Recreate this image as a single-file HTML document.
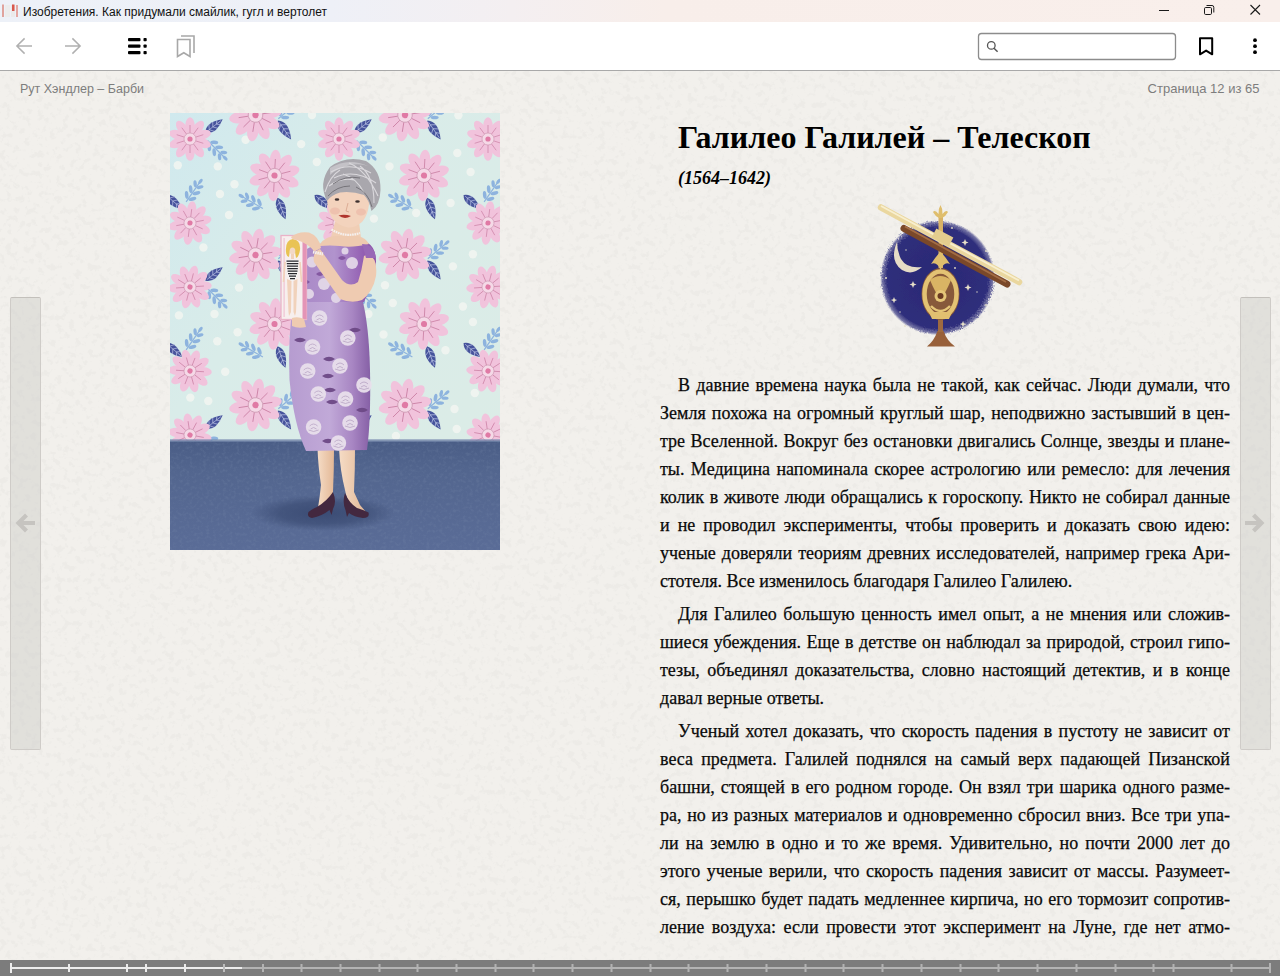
<!DOCTYPE html>
<html><head><meta charset="utf-8">
<style>
*{margin:0;padding:0;box-sizing:border-box}
html,body{width:1280px;height:976px;overflow:hidden;font-family:"Liberation Sans",sans-serif}
body{position:relative;background:#efece7}
#titlebar{position:absolute;left:0;top:0;width:1280px;height:22px;background:linear-gradient(90deg,#edf1f8 0%,#eef0f7 26%,#f4eff1 40%,#f8eeea 52%,#f9efeb 100%)}
#titlebar .t{position:absolute;left:23px;top:5px;font-size:12px;color:#111;white-space:nowrap}
#toolbar{position:absolute;left:0;top:22px;width:1280px;height:48px;background:#fff}
#tbborder{position:absolute;left:0;top:70px;width:1280px;height:1px;background:#a9a9a9}
#page{position:absolute;left:0;top:71px;width:1280px;height:889px;background:#efece7}
.hdr{position:absolute;top:82px;font-size:12.5px;color:#7d7d7d;white-space:nowrap}
#bottombar{position:absolute;left:0;top:960px;width:1280px;height:16px;background:#7d7d7d}
.navbar{position:absolute;top:297px;width:31px;height:453px;background:rgba(205,203,199,0.45);border:1px solid #cfccc8;border-top-color:#c3c0bb;border-radius:2px}
#text{position:absolute;left:660px;top:370.5px;width:570px;font-family:"Liberation Serif",serif;font-size:18px;line-height:28px;color:#0a0a0a;-webkit-text-stroke:0.25px #0a0a0a}
#text .p{margin-bottom:5.2px}
#text .l{height:28px;text-align:justify;text-align-last:justify}
#text .l.ind{padding-left:18px}
#text .l.last{text-align-last:left}
#title{position:absolute;left:678px;top:119px;font-family:"Liberation Serif",serif;font-weight:bold;font-size:32px;color:#000;white-space:nowrap}
#dates{position:absolute;left:678px;top:167.5px;font-family:"Liberation Serif",serif;font-weight:bold;font-style:italic;font-size:18px;color:#000;white-space:nowrap}
</style></head><body>
<div id="titlebar"><span class="t">Изобретения. Как придумали смайлик, гугл и вертолет</span></div>
<div id="toolbar"></div>
<svg id="icons" width="1280" height="71" style="position:absolute;left:0;top:0">
 <!-- app icon -->
 <rect x="2" y="4.5" width="2" height="12.5" fill="#e0a39d"/>
 <rect x="5" y="5" width="5" height="12" fill="#ececec"/>
 <rect x="11" y="5" width="4" height="12" fill="#ebeaea"/>
 <rect x="12" y="4.5" width="2.5" height="6.5" fill="#d9574d"/>
 <rect x="16" y="5" width="2" height="12" fill="#e4a6a1"/>
 <!-- window controls -->
 <rect x="1159" y="10" width="10" height="1" fill="#1a1a1a"/>
 <rect x="1204.5" y="7.5" width="7" height="7" rx="1.2" fill="none" stroke="#1a1a1a" stroke-width="1"/>
 <path d="M1206.5 5.5 h5.5 a1.8 1.8 0 0 1 1.8 1.8 v5.2" fill="none" stroke="#1a1a1a" stroke-width="1"/>
 <path d="M1250.5 5 L1260 14.5 M1260 5 L1250.5 14.5" stroke="#1a1a1a" stroke-width="1.1"/>
 <!-- back / forward -->
 <path d="M32 46 H17 M24.6 38.4 L16.9 46 L24.6 53.6" fill="none" stroke="#b0b0b0" stroke-width="1.5"/>
 <path d="M65 46 H80 M72.4 38.4 L80.1 46 L72.4 53.6" fill="none" stroke="#b0b0b0" stroke-width="1.5"/>
 <!-- toc icon -->
 <rect x="128" y="38" width="12.5" height="3.2" rx="1" fill="#000"/>
 <rect x="128" y="44.5" width="12.5" height="3.2" rx="1" fill="#000"/>
 <rect x="128" y="51" width="12.5" height="3.2" rx="1" fill="#000"/>
 <rect x="143.5" y="38" width="3.2" height="3.2" rx="0.8" fill="#000"/>
 <rect x="143.5" y="44.5" width="3.2" height="3.2" rx="0.8" fill="#000"/>
 <rect x="143.5" y="51" width="3.2" height="3.2" rx="0.8" fill="#000"/>
 <!-- bookmarks list icon -->
 <path d="M177.5 56.5 V39.5 H190 V56.5 L183.8 52.8 Z" fill="none" stroke="#a8a8a8" stroke-width="1.6" stroke-linejoin="miter"/>
 <path d="M181 36 H194 V53" fill="none" stroke="#a8a8a8" stroke-width="1.6"/>
 <!-- search box -->
 <rect x="978.5" y="33.5" width="197" height="26" rx="3" fill="#fff" stroke="#8c8c8c" stroke-width="1.3"/>
 <circle cx="991.3" cy="45.4" r="3.8" fill="none" stroke="#555" stroke-width="1.3"/>
 <path d="M994 48.2 L997.6 51.8" stroke="#555" stroke-width="1.5"/>
 <!-- bookmark -->
 <path d="M1200 54.3 V38.2 H1212.2 V54.3 L1206.1 50.6 Z" fill="none" stroke="#000" stroke-width="2" stroke-linejoin="round"/>
 <!-- kebab -->
 <circle cx="1255" cy="40.2" r="1.9" fill="#000"/>
 <circle cx="1255" cy="46.2" r="1.9" fill="#000"/>
 <circle cx="1255" cy="52.2" r="1.9" fill="#000"/>
</svg>
<div id="tbborder"></div>
<svg id="paper" width="1280" height="889" style="position:absolute;left:0;top:71px">
<filter id="speck" x="0" y="0" width="100%" height="100%">
<feTurbulence type="fractalNoise" baseFrequency="0.16" numOctaves="3" seed="7" result="n"/>
<feColorMatrix in="n" type="matrix" values="0 0 0 0 0.82  0 0 0 0 0.81  0 0 0 0 0.78  -7 0 0 0 3.3"/>
</filter>
<rect width="1280" height="889" fill="#f2f0ec"/>
<rect width="1280" height="889" filter="url(#speck)" opacity="0.6"/>
</svg>
<div class="hdr" style="left:20px">Рут Хэндлер – Барби</div>
<div class="hdr" style="right:20.5px;font-size:13px;top:80.5px">Страница 12 из 65</div>
<div class="navbar" style="left:10px"></div>
<div class="navbar" style="left:1240px"></div>
<svg width="1280" height="40" style="position:absolute;left:0;top:503px">
<path d="M35 20 H20 M26.5 12 L18.5 20 L26.5 28" fill="none" stroke="#c6c4c0" stroke-width="4.2" stroke-linejoin="miter"/>
<path d="M1245 20 H1260 M1253.5 12 L1261.5 20 L1253.5 28" fill="none" stroke="#c6c4c0" stroke-width="4.2" stroke-linejoin="miter"/>
</svg>
<!--ILLUS--><svg id="illus" width="330" height="437" viewBox="0 0 330 437" style="position:absolute;left:170px;top:113px"><defs>
<linearGradient id="bgG" x1="0" y1="0" x2="1" y2="1"><stop offset="0" stop-color="#d0e9ee"/><stop offset="0.35" stop-color="#d9ece9"/><stop offset="1" stop-color="#dcece6"/></linearGradient>
<linearGradient id="floorG" x1="0" y1="0" x2="0" y2="1"><stop offset="0" stop-color="#4a5d86"/><stop offset="0.3" stop-color="#53668f"/><stop offset="1" stop-color="#5a6c97"/></linearGradient>
<radialGradient id="shadowG" cx="0.5" cy="0.5" r="0.5"><stop offset="0" stop-color="#394a72" stop-opacity="0.95"/><stop offset="0.6" stop-color="#3d4e76" stop-opacity="0.75"/><stop offset="1" stop-color="#3d4e76" stop-opacity="0"/></radialGradient>
<g id="flw">

<g fill="#f1c3dc"><ellipse cx="0" cy="-13" rx="4.7" ry="8.8" transform="rotate(0)"/><ellipse cx="0" cy="-13" rx="4.7" ry="8.8" transform="rotate(36)"/><ellipse cx="0" cy="-13" rx="4.7" ry="8.8" transform="rotate(72)"/><ellipse cx="0" cy="-13" rx="4.7" ry="8.8" transform="rotate(108)"/><ellipse cx="0" cy="-13" rx="4.7" ry="8.8" transform="rotate(144)"/><ellipse cx="0" cy="-13" rx="4.7" ry="8.8" transform="rotate(180)"/><ellipse cx="0" cy="-13" rx="4.7" ry="8.8" transform="rotate(216)"/><ellipse cx="0" cy="-13" rx="4.7" ry="8.8" transform="rotate(252)"/><ellipse cx="0" cy="-13" rx="4.7" ry="8.8" transform="rotate(288)"/><ellipse cx="0" cy="-13" rx="4.7" ry="8.8" transform="rotate(324)"/></g>
<path d="M5.7 1.9L13.3 4.3M3.5 4.9L8.2 11.3M0.0 6.0L0.0 14.0M-3.5 4.9L-8.2 11.3M-5.7 1.9L-13.3 4.3M-5.7 -1.9L-13.3 -4.3M-3.5 -4.9L-8.2 -11.3M-0.0 -6.0L-0.0 -14.0M3.5 -4.9L8.2 -11.3M5.7 -1.9L13.3 -4.3" stroke="#c4749a" stroke-width="0.6"/>
<circle r="6" fill="#f5d9e7" stroke="#c893ad" stroke-width="0.6"/><circle r="2.6" fill="#e07aa5"/>
</g>
<g id="leafD"><path d="M-11 0 Q-4 -8.5 11 0 Q-4 8.5 -11 0 Z" fill="#46539c"/><path d="M-9 0 L9 0 M-6 0 L-3 -4.5 M-1.5 0 L1.5 -4 M3 0 L6 -3 M-6 0 L-3 4.5 M-1.5 0 L1.5 4 M3 0 L6 3" stroke="#c3cbea" stroke-width="0.6" fill="none"/></g>
<g id="branch" fill="#8db3de"><path d="M-12 0 L12 0" stroke="#8db3de" stroke-width="1.2"/><ellipse cx="-6" cy="-3.5" rx="4" ry="1.8" transform="rotate(-40 -6 -3.5)"/><ellipse cx="-6" cy="3.5" rx="4" ry="1.8" transform="rotate(40 -6 3.5)"/><ellipse cx="1" cy="-3.5" rx="4" ry="1.8" transform="rotate(-40 1 -3.5)"/><ellipse cx="1" cy="3.5" rx="4" ry="1.8" transform="rotate(40 1 3.5)"/><ellipse cx="8" cy="-3" rx="3.5" ry="1.7" transform="rotate(-40 8 -3)"/><ellipse cx="8" cy="3" rx="3.5" ry="1.7" transform="rotate(40 8 3)"/><ellipse cx="13" cy="0" rx="3" ry="1.6"/></g>
</defs>
<rect width="330" height="437" fill="url(#bgG)"/>
<circle cx="7.8" cy="52.3" r="4.2" fill="#f1f5f1" opacity="0.9"/>
<circle cx="47.8" cy="53.4" r="4.2" fill="#f1f5f1" opacity="0.9"/>
<circle cx="75.6" cy="26.7" r="4.2" fill="#f1f5f1" opacity="0.9"/>
<circle cx="131.2" cy="31.1" r="4.2" fill="#f1f5f1" opacity="0.9"/>
<circle cx="64.5" cy="71.2" r="4.2" fill="#f1f5f1" opacity="0.9"/>
<circle cx="50" cy="81" r="4.2" fill="#f1f5f1" opacity="0.9"/>
<circle cx="59" cy="102" r="4.2" fill="#f1f5f1" opacity="0.9"/>
<circle cx="33.4" cy="134.5" r="4.2" fill="#f1f5f1" opacity="0.9"/>
<circle cx="69" cy="174.6" r="4.2" fill="#f1f5f1" opacity="0.9"/>
<circle cx="44.5" cy="201" r="4.2" fill="#f1f5f1" opacity="0.9"/>
<circle cx="8.9" cy="202.4" r="4.2" fill="#f1f5f1" opacity="0.9"/>
<circle cx="142" cy="2" r="4.2" fill="#f1f5f1" opacity="0.9"/>
<circle cx="146.8" cy="49" r="4.2" fill="#f1f5f1" opacity="0.9"/>
<circle cx="212.8" cy="24.5" r="4.2" fill="#f1f5f1" opacity="0.9"/>
<circle cx="219.5" cy="53.4" r="4.2" fill="#f1f5f1" opacity="0.9"/>
<circle cx="287.3" cy="40" r="4.2" fill="#f1f5f1" opacity="0.9"/>
<circle cx="300.6" cy="59" r="4.2" fill="#f1f5f1" opacity="0.9"/>
<circle cx="288.4" cy="2.2" r="4.2" fill="#f1f5f1" opacity="0.9"/>
<circle cx="280.6" cy="90" r="4.2" fill="#f1f5f1" opacity="0.9"/>
<circle cx="203.9" cy="105.6" r="4.2" fill="#f1f5f1" opacity="0.9"/>
<circle cx="246.2" cy="100" r="4.2" fill="#f1f5f1" opacity="0.9"/>
<circle cx="302.9" cy="141.2" r="4.2" fill="#f1f5f1" opacity="0.9"/>
<circle cx="282.9" cy="153.4" r="4.2" fill="#f1f5f1" opacity="0.9"/>
<circle cx="215" cy="172.3" r="4.2" fill="#f1f5f1" opacity="0.9"/>
<circle cx="222.8" cy="190" r="4.2" fill="#f1f5f1" opacity="0.9"/>
<circle cx="292.9" cy="193.5" r="4.2" fill="#f1f5f1" opacity="0.9"/>
<circle cx="302.9" cy="209" r="4.2" fill="#f1f5f1" opacity="0.9"/>
<circle cx="198.4" cy="201" r="4.2" fill="#f1f5f1" opacity="0.9"/>
<circle cx="20.3" cy="284.6" r="4.2" fill="#f1f5f1" opacity="0.9"/>
<circle cx="38.3" cy="288" r="4.2" fill="#f1f5f1" opacity="0.9"/>
<circle cx="55.2" cy="258.7" r="4.2" fill="#f1f5f1" opacity="0.9"/>
<circle cx="47.3" cy="228.3" r="4.2" fill="#f1f5f1" opacity="0.9"/>
<circle cx="67.6" cy="219.3" r="4.2" fill="#f1f5f1" opacity="0.9"/>
<circle cx="213.5" cy="221.5" r="4.2" fill="#f1f5f1" opacity="0.9"/>
<circle cx="275.5" cy="237.3" r="4.2" fill="#f1f5f1" opacity="0.9"/>
<circle cx="284.5" cy="296" r="4.2" fill="#f1f5f1" opacity="0.9"/>
<circle cx="304.8" cy="280" r="4.2" fill="#f1f5f1" opacity="0.9"/>
<circle cx="225.9" cy="323" r="4.2" fill="#f1f5f1" opacity="0.9"/>
<circle cx="286.7" cy="316" r="4.2" fill="#f1f5f1" opacity="0.9"/>
<use href="#leafD" transform="translate(44 13) rotate(-38) scale(1)"/>
<use href="#branch" transform="translate(46 36) rotate(45) scale(1.0)"/>
<use href="#leafD" transform="translate(4 89) rotate(40) scale(1)"/>
<use href="#branch" transform="translate(23 79) rotate(-55) scale(1.0)"/>
<use href="#leafD" transform="translate(44 161) rotate(-38) scale(1)"/>
<use href="#branch" transform="translate(46 184) rotate(45) scale(1.0)"/>
<use href="#leafD" transform="translate(4 237) rotate(40) scale(1)"/>
<use href="#branch" transform="translate(23 227) rotate(-55) scale(1.0)"/>
<use href="#leafD" transform="translate(44 309) rotate(-38) scale(1)"/>
<use href="#branch" transform="translate(46 332) rotate(45) scale(1.0)"/>
<use href="#leafD" transform="translate(193 13) rotate(-38) scale(1)"/>
<use href="#branch" transform="translate(195 36) rotate(45) scale(1.0)"/>
<use href="#leafD" transform="translate(153 89) rotate(40) scale(1)"/>
<use href="#branch" transform="translate(172 79) rotate(-55) scale(1.0)"/>
<use href="#leafD" transform="translate(193 161) rotate(-38) scale(1)"/>
<use href="#branch" transform="translate(195 184) rotate(45) scale(1.0)"/>
<use href="#leafD" transform="translate(153 237) rotate(40) scale(1)"/>
<use href="#branch" transform="translate(172 227) rotate(-55) scale(1.0)"/>
<use href="#leafD" transform="translate(193 309) rotate(-38) scale(1)"/>
<use href="#branch" transform="translate(195 332) rotate(45) scale(1.0)"/>
<use href="#leafD" transform="translate(342 13) rotate(-38) scale(1)"/>
<use href="#branch" transform="translate(344 36) rotate(45) scale(1.0)"/>
<use href="#leafD" transform="translate(302 89) rotate(40) scale(1)"/>
<use href="#branch" transform="translate(321 79) rotate(-55) scale(1.0)"/>
<use href="#leafD" transform="translate(342 161) rotate(-38) scale(1)"/>
<use href="#branch" transform="translate(344 184) rotate(45) scale(1.0)"/>
<use href="#leafD" transform="translate(302 237) rotate(40) scale(1)"/>
<use href="#branch" transform="translate(321 227) rotate(-55) scale(1.0)"/>
<use href="#leafD" transform="translate(342 309) rotate(-38) scale(1)"/>
<use href="#branch" transform="translate(344 332) rotate(45) scale(1.0)"/>
<use href="#leafD" transform="translate(114.5 17) rotate(55) scale(1.05)"/>
<use href="#branch" transform="translate(117.5 -2) rotate(-40) scale(1.0)"/>
<use href="#leafD" transform="translate(114.5 157) rotate(55) scale(1.05)"/>
<use href="#branch" transform="translate(117.5 138) rotate(-40) scale(1.0)"/>
<use href="#leafD" transform="translate(114.5 307) rotate(55) scale(1.05)"/>
<use href="#branch" transform="translate(117.5 288) rotate(-40) scale(1.0)"/>
<use href="#leafD" transform="translate(264 17) rotate(55) scale(1.05)"/>
<use href="#branch" transform="translate(267 -2) rotate(-40) scale(1.0)"/>
<use href="#leafD" transform="translate(264 157) rotate(55) scale(1.05)"/>
<use href="#branch" transform="translate(267 138) rotate(-40) scale(1.0)"/>
<use href="#leafD" transform="translate(264 307) rotate(55) scale(1.05)"/>
<use href="#branch" transform="translate(267 288) rotate(-40) scale(1.0)"/>
<use href="#leafD" transform="translate(111.5 95.5) rotate(70) scale(1.05)"/>
<use href="#branch" transform="translate(82.5 89.5) rotate(-150) scale(1.0)"/>
<use href="#leafD" transform="translate(111.5 244) rotate(70) scale(1.05)"/>
<use href="#branch" transform="translate(82.5 238) rotate(-150) scale(1.0)"/>
<use href="#leafD" transform="translate(261 95.5) rotate(70) scale(1.05)"/>
<use href="#branch" transform="translate(232 89.5) rotate(-150) scale(1.0)"/>
<use href="#leafD" transform="translate(261 244) rotate(70) scale(1.05)"/>
<use href="#branch" transform="translate(232 238) rotate(-150) scale(1.0)"/>
<use href="#flw" transform="translate(20 26) rotate(0) scale(1.0)"/>
<use href="#flw" transform="translate(20 110) rotate(7) scale(1.0)"/>
<use href="#flw" transform="translate(20 174) rotate(14) scale(1.0)"/>
<use href="#flw" transform="translate(20 258) rotate(21) scale(1.0)"/>
<use href="#flw" transform="translate(20 322) rotate(28) scale(1.0)"/>
<use href="#flw" transform="translate(169 26) rotate(0) scale(1.0)"/>
<use href="#flw" transform="translate(169 110) rotate(7) scale(1.0)"/>
<use href="#flw" transform="translate(169 174) rotate(14) scale(1.0)"/>
<use href="#flw" transform="translate(169 258) rotate(21) scale(1.0)"/>
<use href="#flw" transform="translate(169 322) rotate(28) scale(1.0)"/>
<use href="#flw" transform="translate(318 26) rotate(0) scale(1.0)"/>
<use href="#flw" transform="translate(318 110) rotate(7) scale(1.0)"/>
<use href="#flw" transform="translate(318 174) rotate(14) scale(1.0)"/>
<use href="#flw" transform="translate(318 258) rotate(21) scale(1.0)"/>
<use href="#flw" transform="translate(318 322) rotate(28) scale(1.0)"/>
<use href="#flw" transform="translate(85.5 2) rotate(9) scale(1.22)"/>
<use href="#flw" transform="translate(85.5 142) rotate(9) scale(1.22)"/>
<use href="#flw" transform="translate(85.5 292) rotate(9) scale(1.22)"/>
<use href="#flw" transform="translate(235 2) rotate(9) scale(1.22)"/>
<use href="#flw" transform="translate(235 142) rotate(9) scale(1.22)"/>
<use href="#flw" transform="translate(235 292) rotate(9) scale(1.22)"/>
<use href="#flw" transform="translate(104.5 62.5) rotate(3) scale(1.18)"/>
<use href="#flw" transform="translate(104.5 211) rotate(3) scale(1.18)"/>
<use href="#flw" transform="translate(254 62.5) rotate(3) scale(1.18)"/>
<use href="#flw" transform="translate(254 211) rotate(3) scale(1.18)"/>
<rect x="0" y="327.5" width="330" height="109.5" fill="url(#floorG)"/>
<rect x="0" y="326.0" width="330" height="3" fill="#7d8fb3" opacity="0.6"/>
<filter id="mott" x="0" y="0" width="100%" height="100%"><feTurbulence type="fractalNoise" baseFrequency="0.3" numOctaves="2" seed="11"/><feColorMatrix type="matrix" values="0 0 0 0 0.2  0 0 0 0 0.27  0 0 0 0 0.42  -3 0 0 0 1.6"/></filter>
<rect x="0" y="327.5" width="330" height="109.5" filter="url(#mott)" opacity="0.2"/>
<ellipse cx="153" cy="400" rx="72" ry="18" fill="url(#shadowG)"/>
<defs>
<linearGradient id="bodG" x1="0" y1="0" x2="1" y2="0"><stop offset="0" stop-color="#a887c6"/><stop offset="0.5" stop-color="#b193cd"/><stop offset="0.85" stop-color="#935fb2"/><stop offset="1" stop-color="#8a4fa6"/></linearGradient>
<linearGradient id="skirtG" x1="0" y1="0" x2="1" y2="0"><stop offset="0" stop-color="#b69cd0"/><stop offset="0.5" stop-color="#c1a9d8"/><stop offset="0.78" stop-color="#a886c3"/><stop offset="1" stop-color="#8660a6"/></linearGradient>
<linearGradient id="legG" x1="0" y1="0" x2="1" y2="0"><stop offset="0" stop-color="#f5dcc6"/><stop offset="1" stop-color="#e3b896"/></linearGradient>
<g id="rose"><circle r="7.8" fill="#e9e0ec"/><path d="M-4 -1 Q0 -5 4 -1 M-3 2 Q0 -1 3 2 M-5 3 Q0 6 5 3" fill="none" stroke="#b9a6c4" stroke-width="0.8"/></g>
<g id="dleaf"><path d="M-6 0 Q0 -4.5 6 0 Q0 4.5 -6 0 Z" fill="#6d4986"/></g>
</defs>
<g transform="translate(-170 -113)">
 <!-- legs -->
 <path d="M317.5 448 L334 448 Q334 470 333 492 L331 500 L318 508 Q320 495 321 485 Q318 465 317.5 448 Z" fill="url(#legG)"/>
 <path d="M339 448 L355 448 Q355 470 354 492 L360 505 L366 512 L352 508 Q346 497 345 490 Q340 470 339 448 Z" fill="url(#legG)"/>
 <!-- shoes -->
 <path d="M333 492 Q337 502 333 509 L331.5 515 L329.5 510 Q322 516 312 518 Q306.5 517 308.5 512 Q313 508.5 317 507 Q327 501 333 492 Z" fill="#43283f"/>
 <path d="M345 493 Q349 503 357 508 Q364 510 368.5 512.5 Q370 518 363 518 Q354 517 349 513 L347 517 L345.5 510 Q342 502 345 493 Z" fill="#43283f"/>
 <!-- skirt -->
 <path d="M294 298 L362 298 Q369 325 370 370 Q371 420 367 450 L306 451 Q294 425 289.5 380 Q287.5 335 294 298 Z" fill="url(#skirtG)"/>
 <g opacity="0.95">
  <use href="#dleaf" x="329" y="359"/><use href="#dleaf" x="328" y="376"/><use href="#dleaf" x="330" y="390"/><use href="#dleaf" x="332" y="402"/><use href="#dleaf" x="328" y="441"/><use href="#dleaf" x="355" y="330"/><use href="#dleaf" x="300" y="340"/><use href="#dleaf" x="362" y="410"/>
  <use href="#rose" x="312.5" y="347"/><use href="#rose" x="307.7" y="371"/><use href="#rose" x="340" y="366"/><use href="#rose" x="318.3" y="394"/><use href="#rose" x="345.5" y="399"/><use href="#rose" x="313.6" y="427"/><use href="#rose" x="350" y="423"/><use href="#rose" x="338.4" y="443"/><use href="#rose" x="319.5" y="318"/><use href="#rose" x="347.8" y="338"/><use href="#rose" x="364" y="385"/>
 </g>
 <!-- bodice -->
 <path d="M305 250 Q322 240 340 244 Q352 247 368 243 Q376 248 376 262 L372 284 L364 302 L293 302 Q296 270 305 250 Z" fill="url(#bodG)"/>
 <g fill="#e6dcea" opacity="0.9"><circle cx="312" cy="262" r="5.5"/><circle cx="324" cy="284" r="6"/><circle cx="309" cy="294" r="5"/><circle cx="352" cy="263" r="6"/><circle cx="336" cy="298" r="5"/><circle cx="345" cy="251" r="3.5"/></g>
 <g fill="#7a4c98" opacity="0.8"><path d="M316 274 q4 -4 8 0 q-4 4 -8 0z"/><path d="M338 258 q4 -4 8 0 q-4 4 -8 0z"/><path d="M302 282 q4 -4 8 0 q-4 4 -8 0z"/></g>
 <!-- neck -->
 <path d="M335 222 L359 222 L361 238 Q356 246 347 246 Q336 246 330 241 Z" fill="#f0ceb5"/>
 <path d="M320 244 Q326 236 336 236 L358 236 Q366 238 369 244 Q352 248 340 246 Q330 245 320 246 Z" fill="#eecab0"/>
 <!-- necklace -->
 <path d="M331.5 229.5 Q345 238 360 233" fill="none" stroke="#f5f0ee" stroke-width="2.2" stroke-dasharray="1.7 0.7"/>
 <!-- face -->
 <path d="M327 190 L369 190 Q371 212 362 222 Q355 228 348 227.5 Q338 226 332 218 Q326 208 327 190 Z" fill="#f3d3bd"/>
 <ellipse cx="335" cy="211" rx="5" ry="3.5" fill="#eab0a0" opacity="0.5"/>
 <ellipse cx="361" cy="212" rx="5" ry="3.5" fill="#eab0a0" opacity="0.5"/>
 <ellipse cx="337" cy="199.5" rx="2.3" ry="1.3" fill="#3e3230"/>
 <ellipse cx="357.5" cy="201.5" rx="2.3" ry="1.3" fill="#3e3230"/>
 <path d="M348 203 L346 211 L349 212" fill="none" stroke="#d29c84" stroke-width="0.7"/>
 <path d="M338.5 215.5 Q344.5 214 351 216 Q344.5 220 338.5 215.5 Z" fill="#b0352d"/>
 <!-- hair -->
 <path d="M327 201 Q318 183 330 167 Q346 155 366 161 Q381 170 380.5 190 Q380 205 371.5 211 Q369 200 364 195 Q352 191 340 192.5 Q331 195 327 201 Z" fill="#a9a7ad"/>
 <path d="M330 168 Q348 157 368 166 Q360 163 350 165 Q338 168 330 175 Z" fill="#c4c2c7"/>
 <path d="M331 172 Q350 161 371 173 M334 178 Q354 168 376 183 M349 163 Q366 170 378 196 M329 186 Q341 177 354 180 M343 174 Q357 178 364 193 M325 192 Q330 176 340 170 M360 166 Q374 176 374 203" fill="none" stroke="#dad8dc" stroke-width="1.1"/>
 <path d="M328 196 Q337 186 350 186 M356 187 Q368 192 372 207 M333 184 Q345 175 360 178" fill="none" stroke="#6f6d73" stroke-width="0.9"/>
 <!-- arm -->
 <path d="M368 254 Q378 258 376 276 Q373 292 362 300 Q352 304 340 299 L314 262 Q312 252 320 249 L342 280 Q350 288 358 282 Q362 270 364 256 Z" fill="#efcbb1"/>
 <path d="M362 244 Q374 244 376 258 L366 258 Z" fill="#9868b6"/>
 <!-- bracelet -->
 <path d="M313 252 L323 254" stroke="#f5f0ee" stroke-width="3" stroke-dasharray="1.6 0.6"/>
 <!-- box -->
 <rect x="281" y="235.5" width="25.5" height="84" fill="#f7efee"/>
 <rect x="281" y="235.5" width="25.5" height="84" fill="none" stroke="#eab3c8" stroke-width="1.3"/>
 <rect x="302.5" y="238" width="4" height="81" fill="#e494b6"/>
 <rect x="283.5" y="238" width="1.2" height="79" fill="#efc3d3"/>
 <!-- doll -->
 <path d="M286 252 Q285 240 293 239 Q301 240 300 250 Q299 257 296 258 L295 252 Q293 248 290 250 L289 257 Q286 256 286 252 Z" fill="#e9c354"/>
 <ellipse cx="292.5" cy="251" rx="2.8" ry="3.5" fill="#f3d9c6"/>
 <rect x="291" y="254" width="3" height="5" fill="#f1d2bb"/>
 <path d="M286.5 260 L298.5 260 L298 274 Q295 280 292.5 281 Q289 280 287 274 Z" fill="#f4f4f4"/>
 <path d="M286.5 261 L298.5 261 M286.8 263.5 L298.3 263.5 M287 266 L298 266 M287.3 268.5 L297.8 268.5 M287.6 271 L297.5 271 M288 273.5 L297 273.5 M289 276 L296 276 M290 278.5 L295 278.5" stroke="#26262c" stroke-width="1.25"/>
 <path d="M287 279 L291.5 281 L291 312 L289 316 L288.5 312 Z M293.5 281 L297.5 279 L296 312 L295 316 L293.5 312 Z" fill="#f1d2bb"/>
 <path d="M285 262 L283.5 282 M300 262 L301.5 282" stroke="#f1d2bb" stroke-width="1.6"/>
 <!-- hand on box -->
 <path d="M291 237 Q298 231 309 232.5 Q319 236 321 248 L314.5 251.5 Q308 243.5 297 240 Q292 240 291 237 Z" fill="#efcbb1"/>
 <path d="M292 318 Q298 316 304 319 L306 327 Q298 329 292 326 Z" fill="#efcbb1"/>
</g>
</svg><!--/ILLUS-->
<!--TEL--><svg id="tel" width="160" height="160" viewBox="870 195 160 160" style="position:absolute;left:870px;top:195px">
<defs>
<radialGradient id="skyG" cx="0.5" cy="0.5" r="0.5"><stop offset="0" stop-color="#2a2975"/><stop offset="0.88" stop-color="#2f2e7b"/><stop offset="0.96" stop-color="#4c4c8e" stop-opacity="0.75"/><stop offset="1" stop-color="#7070a6" stop-opacity="0"/></radialGradient>
<filter id="fz" x="-10%" y="-10%" width="120%" height="120%"><feTurbulence type="fractalNoise" baseFrequency="0.7" numOctaves="1" seed="3" result="t"/><feDisplacementMap in="SourceGraphic" in2="t" scale="4"/></filter>
</defs>
<circle cx="937.5" cy="277.8" r="57.5" fill="url(#skyG)" filter="url(#fz)"/>
<!-- moon -->
<path d="M897 242 Q889 261 902 270 Q912 276 922 267 Q907 269 901 259 Q897 251 897 242 Z" fill="#e6dcc6"/>
<!-- stars -->
<g fill="#e6dfc8">
<path d="M913 281 l1 2.5 2.5 1 -2.5 1 -1 2.5 -1 -2.5 -2.5 -1 2.5 -1 z"/>
<path d="M965 239 l1 2.5 2.5 1 -2.5 1 -1 2.5 -1 -2.5 -2.5 -1 2.5 -1 z"/>
<path d="M968 284 l1 2.5 2.5 1 -2.5 1 -1 2.5 -1 -2.5 -2.5 -1 2.5 -1 z"/>
<path d="M894 297 l0.9 2.2 2.2 0.9 -2.2 0.9 -0.9 2.2 -0.9 -2.2 -2.2 -0.9 2.2 -0.9 z"/>
<path d="M963 321 l0.9 2.2 2.2 0.9 -2.2 0.9 -0.9 2.2 -0.9 -2.2 -2.2 -0.9 2.2 -0.9 z"/>
<circle cx="952" cy="228" r="0.9"/><circle cx="955" cy="268" r="0.9"/><circle cx="986" cy="251" r="0.9"/><circle cx="886" cy="278" r="1"/><circle cx="905" cy="326" r="0.9"/><circle cx="986" cy="305" r="0.9"/><circle cx="906" cy="250" r="0.7"/><circle cx="948" cy="305" r="0.8"/><circle cx="925" cy="232" r="0.8"/><circle cx="977" cy="292" r="0.7"/><circle cx="900" cy="312" r="0.7"/>
</g>
<!-- stand base -->
<path d="M927 346.5 Q934 341 937.5 331 L943.5 331 Q947 341 955 346.5 Z" fill="#98603a"/>
<rect x="938" y="318" width="5" height="14" fill="#9e6a40"/>
<!-- ornamental oval -->
<ellipse cx="940.5" cy="294" rx="19" ry="26" fill="#87593a"/>
<ellipse cx="940.5" cy="294" rx="16" ry="22.5" fill="none" stroke="#e3c274" stroke-width="4.5"/>
<path d="M930 280 Q940 272 951 280 Q946 292 940.5 300 Q935 292 930 280 Z" fill="#d9b464"/>
<circle cx="940.5" cy="296" r="6" fill="#e5c678"/>
<circle cx="940.5" cy="296" r="3" fill="#6b3b22"/>
<path d="M929 312 L952 312 L949 319 L932 319 Z" fill="#e2c070"/>
<path d="M931 306 Q940.5 316 950 306" fill="none" stroke="#e5c678" stroke-width="2.5"/>
<!-- post -->
<rect x="938.5" y="216" width="4.5" height="52" fill="#d8b266"/>
<path d="M931 264 Q936 256 940.5 252 Q945 256 950 264 Q944 261 940.5 270 Q937 261 931 264 Z" fill="#dfbe6d"/>
<path d="M940.5 205 Q943 209 942.5 214 Q946 209 948 212 Q946 216 942 218 L939 218 Q935 216 933 212 Q935 209 938.5 214 Q938 209 940.5 205 Z" fill="#dfbe6d"/>
<!-- dark tube -->
<path d="M904 228.5 L1007 284" stroke="#7a4829" stroke-width="7" stroke-linecap="round"/>
<path d="M905 226.5 L1006 282" stroke="#a36d45" stroke-width="1.8"/>
<!-- light tube -->
<path d="M881 207.5 L1019 282" stroke="#ead79f" stroke-width="6.5" stroke-linecap="round"/>
<path d="M881 206 L1019 280.5" stroke="#f8efcf" stroke-width="1.8"/>
<path d="M934 233 L951 242" stroke="#e3cd8e" stroke-width="10"/>
</svg>
<!--/TEL-->
<div id="title">Галилео Галилей – Телескоп</div>
<div id="dates">(1564–1642)</div>
<div id="text">
<div class="p"><div class="l ind">В давние времена наука была не такой, как сейчас. Люди думали, что</div><div class="l ">Земля похожа на огромный круглый шар, неподвижно застывший в цен-</div><div class="l ">тре Вселенной. Вокруг без остановки двигались Солнце, звезды и плане-</div><div class="l ">ты. Медицина напоминала скорее астрологию или ремесло: для лечения</div><div class="l ">колик в животе люди обращались к гороскопу. Никто не собирал данные</div><div class="l ">и не проводил эксперименты, чтобы проверить и доказать свою идею:</div><div class="l ">ученые доверяли теориям древних исследователей, например грека Ари-</div><div class="l last">стотеля. Все изменилось благодаря Галилео Галилею.</div></div>
<div class="p"><div class="l ind">Для Галилео большую ценность имел опыт, а не мнения или сложив-</div><div class="l ">шиеся убеждения. Еще в детстве он наблюдал за природой, строил гипо-</div><div class="l ">тезы, объединял доказательства, словно настоящий детектив, и в конце</div><div class="l last">давал верные ответы.</div></div>
<div class="p"><div class="l ind">Ученый хотел доказать, что скорость падения в пустоту не зависит от</div><div class="l ">веса предмета. Галилей поднялся на самый верх падающей Пизанской</div><div class="l ">башни, стоящей в его родном городе. Он взял три шарика одного разме-</div><div class="l ">ра, но из разных материалов и одновременно сбросил вниз. Все три упа-</div><div class="l ">ли на землю в одно и то же время. Удивительно, но почти 2000 лет до</div><div class="l ">этого ученые верили, что скорость падения зависит от массы. Разумеет-</div><div class="l ">ся, перышко будет падать медленнее кирпича, но его тормозит сопротив-</div><div class="l ">ление воздуха: если провести этот эксперимент на Луне, где нет атмо-</div></div>
</div>
<svg id="prog" width="1280" height="16" style="position:absolute;left:0;top:960px"><rect width="1280" height="16" fill="#7c7c7c"/><rect x="11" y="7" width="231" height="2" fill="#ececec"/><rect x="242" y="7" width="1028" height="2" fill="#b3b3b3"/><rect x="10" y="3" width="2" height="10" fill="#ececec"/><rect x="68" y="4" width="2" height="8" fill="#ececec"/><rect x="126" y="4" width="2" height="8" fill="#ececec"/><rect x="145" y="4" width="2" height="8" fill="#ececec"/><rect x="184" y="4" width="2" height="8" fill="#ececec"/><rect x="223" y="4" width="2" height="8" fill="#bdbdbd"/><rect x="262" y="4" width="2" height="8" fill="#b3b3b3"/><rect x="300.5" y="4" width="2" height="8" fill="#b3b3b3"/><rect x="339.5" y="4" width="2" height="8" fill="#b3b3b3"/><rect x="378.5" y="4" width="2" height="8" fill="#b3b3b3"/><rect x="416.5" y="4" width="2" height="8" fill="#b3b3b3"/><rect x="455.5" y="4" width="2" height="8" fill="#b3b3b3"/><rect x="494.5" y="4" width="2" height="8" fill="#b3b3b3"/><rect x="532.5" y="4" width="2" height="8" fill="#b3b3b3"/><rect x="571.5" y="4" width="2" height="8" fill="#b3b3b3"/><rect x="610.5" y="4" width="2" height="8" fill="#b3b3b3"/><rect x="649.5" y="4" width="2" height="8" fill="#b3b3b3"/><rect x="687.5" y="4" width="2" height="8" fill="#b3b3b3"/><rect x="726.5" y="4" width="2" height="8" fill="#b3b3b3"/><rect x="765.5" y="4" width="2" height="8" fill="#b3b3b3"/><rect x="804.5" y="4" width="2" height="8" fill="#b3b3b3"/><rect x="842.5" y="4" width="2" height="8" fill="#b3b3b3"/><rect x="881.5" y="4" width="2" height="8" fill="#b3b3b3"/><rect x="920.5" y="4" width="2" height="8" fill="#b3b3b3"/><rect x="959.5" y="4" width="2" height="8" fill="#b3b3b3"/><rect x="997.5" y="4" width="2" height="8" fill="#b3b3b3"/><rect x="1036.5" y="4" width="2" height="8" fill="#b3b3b3"/><rect x="1075.5" y="4" width="2" height="8" fill="#b3b3b3"/><rect x="1114.5" y="4" width="2" height="8" fill="#b3b3b3"/><rect x="1152.5" y="4" width="2" height="8" fill="#b3b3b3"/><rect x="1172.5" y="4" width="2" height="8" fill="#b3b3b3"/><rect x="1230.5" y="4" width="2" height="8" fill="#b3b3b3"/><rect x="1269" y="3" width="2" height="10" fill="#b3b3b3"/></svg>
</body></html>
